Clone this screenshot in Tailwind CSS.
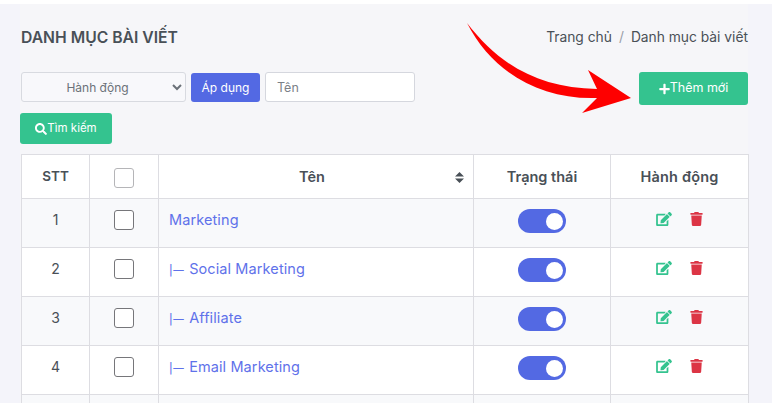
<!DOCTYPE html>
<html lang="en">
<head>
    <meta charset="UTF-8">
    <meta name="viewport" content="width=device-width, initial-scale=1.0">
    <title>Danh mục bài viết</title>
    <script src="https://cdn.jsdelivr.net/npm/@tailwindcss/browser@4"></script>
</head>
<body class="relative h-[403px] w-[772px] overflow-hidden bg-white font-['Inter','Noto_Sans',sans-serif] text-[#495057]">
<div class="mt-[4px] h-[399px] overflow-hidden bg-[#f4f4fa] pl-[20px] pr-[24px]">
    <div class="h-full bg-[#f6f6f9]">
        <!-- Title + breadcrumb -->
        <div class="flex h-[68px] items-start justify-between pl-[1px] pt-[23px]">
            <h2 class="mt-[1px] text-[15.7px] leading-[20px] font-semibold text-[#495057]">DANH MỤC BÀI VIẾT</h2>
            <div class="flex gap-[7px] text-[13.8px] leading-[20px] text-[#495057]">
                <span>Trang chủ</span><span class="text-[#9aa0a8]">/</span><span>Danh mục bài viết</span>
            </div>
        </div>

        <!-- Toolbar -->
        <div class="flex items-start justify-between">
            <div>
                <div class="flex items-start pl-[1px]">
                    <select class="h-[30px] w-[165px] rounded-[3px] border border-[#d8dae0] bg-[#f8f8fb] text-center text-[12px] text-[#6b7178]">
                        <option>Hành động</option>
                    </select>
                    <button class="ml-[5px] mt-[1px] h-[29px] w-[69px] rounded-[3px] bg-[#5369e3] text-[12px] text-white">Áp dụng</button>
                    <input type="text" placeholder="Tên" class="ml-[5px] h-[30px] w-[150px] rounded-[3px] border border-[#d5d7de] bg-white pl-[11px] text-[12.5px] placeholder:text-[#7b8087]">
                </div>
                <button class="mt-[11px] flex h-[31px] w-[92px] items-center justify-center rounded-[3px] bg-[#34c38f] text-[11.5px] text-white">
                    <svg class="h-[12px] w-[12px] fill-white" viewBox="0 0 512 512"><path d="M505 442.7L405.3 343c-4.5-4.5-10.6-7-17-7H372c27.6-35.3 44-79.7 44-128C416 93.1 322.9 0 208 0S0 93.1 0 208s93.1 208 208 208c48.3 0 92.7-16.4 128-44v16.3c0 6.4 2.5 12.5 7 17l99.7 99.7c9.4 9.4 24.6 9.4 33.9 0l28.3-28.3c9.4-9.4 9.4-24.6.1-34zM208 336c-70.7 0-128-57.2-128-128 0-70.7 57.2-128 128-128 70.7 0 128 57.2 128 128 0 70.7-57.2 128-128 128z"/></svg>Tìm kiếm
                </button>
            </div>
            <button class="flex h-[33px] w-[109px] items-center justify-center rounded-[3px] bg-[#34c38f] text-[12.5px] text-white">
                <svg class="h-[12px] w-[11px] fill-white" viewBox="0 0 448 512"><path d="M416 208H272V64c0-17.67-14.33-32-32-32h-32c-17.67 0-32 14.33-32 32v144H32c-17.67 0-32 14.33-32 32v32c0 17.67 14.33 32 32 32h144v144c0 17.67 14.33 32 32 32h32c17.67 0 32-14.33 32-32V304h144c17.67 0 32-14.33 32-32v-32c0-17.67-14.33-32-32-32z"/></svg>Thêm mới
            </button>
        </div>

        <!-- Table -->
        <table class="ml-[1px] mt-[10px] w-[727px] table-fixed border-collapse bg-white text-[14px]">
            <colgroup>
                <col class="w-[68px]"><col class="w-[69px]"><col class="w-[315px]"><col class="w-[137px]"><col class="w-[138px]">
            </colgroup>
            <thead>
                <tr class="h-[44px] font-semibold">
                    <th class="border border-[#dddde2] text-[13.5px] font-semibold">STT</th>
                    <th class="border border-[#dddde2]"><span class="mx-auto mt-[2px] block h-[20px] w-[20px] rounded-[3px] border border-[#b5b5b8] bg-white"></span></th>
                    <th class="relative border border-[#dddde2] pr-[8px] text-[14.5px] font-semibold">Tên
                        <svg class="absolute right-[9px] top-[17px] h-[11px] w-[9px] fill-[#495057]" viewBox="0 0 9 11"><path d="M4.5 0L9 4.5H0zM4.5 11L0 6.5h9z"/></svg>
                    </th>
                    <th class="border border-[#dddde2] text-[14.5px] font-semibold">Trạng thái</th>
                    <th class="border border-[#dddde2] text-[14.5px] font-semibold tracking-[0.2px]">Hành động</th>
                </tr>
            </thead>
            <tbody>
                <tr class="h-[49px] bg-[#f8f9fb]">
                    <td class="border border-[#dddde2] pb-[7px] text-center">1</td>
                    <td class="border border-[#dddde2] pb-[6px]"><span class="mx-auto block h-[20px] w-[20px] rounded-[3px] border border-[#76767a] bg-white"></span></td>
                    <td class="border border-[#dddde2] pb-[7px] pl-[10px] text-[14.5px] tracking-[0.1px] text-[#5f72ea]">Marketing</td>
                    <td class="border border-[#dddde2] pb-[4px]"><span class="mx-auto flex h-[24px] w-[48px] items-center justify-end rounded-full bg-[#5369e3] pr-[3px]"><span class="h-[17px] w-[17px] rounded-full bg-white"></span></span></td>
                    <td class="border border-[#dddde2]">
                        <div class="flex items-center justify-center gap-[18px] pb-[9px]">
                            <svg class="h-[14px] w-[16px] fill-[#34c38f]" viewBox="0 0 576 512"><path d="M402.6 83.2l90.2 90.2c3.8 3.8 3.8 10 0 13.8L274.4 405.6l-92.8 10.3c-12.4 1.4-22.9-9.1-21.5-21.5l10.3-92.8L388.8 83.2c3.8-3.8 10-3.8 13.8 0zm162-22.9l-48.8-48.8c-15.2-15.2-39.9-15.2-55.2 0l-35.4 35.4c-3.8 3.8-3.8 10 0 13.8l90.2 90.2c3.8 3.8 10 3.8 13.8 0l35.4-35.4c15.2-15.3 15.2-40 0-55.2zM384 346.2V448H64V128h229.8c3.2 0 6.2-1.3 8.5-3.5l40-40c7.6-7.6 2.2-20.5-8.5-20.5H48C21.5 64 0 85.5 0 112v352c0 26.5 21.5 48 48 48h352c26.5 0 48-21.5 48-48V306.2c0-10.7-12.9-16-20.5-8.5l-40 40c-2.2 2.3-3.5 5.3-3.5 8.5z"/></svg>
                            <svg class="h-[14px] w-[13px] fill-[#dc3545]" viewBox="0 0 448 512"><path d="M432 32H312l-9.4-18.7A24 24 0 0 0 281.1 0H166.8a23.72 23.72 0 0 0-21.4 13.3L136 32H16A16 16 0 0 0 0 48v32a16 16 0 0 0 16 16h416a16 16 0 0 0 16-16V48a16 16 0 0 0-16-16zM53.2 467a48 48 0 0 0 47.9 45h245.8a48 48 0 0 0 47.9-45L416 128H32z"/></svg>
                        </div>
                    </td>
                </tr>
                <tr class="h-[49px] bg-white">
                    <td class="border border-[#dddde2] pb-[7px] text-center">2</td>
                    <td class="border border-[#dddde2] pb-[6px]"><span class="mx-auto block h-[20px] w-[20px] rounded-[3px] border border-[#76767a] bg-white"></span></td>
                    <td class="border border-[#dddde2] pb-[7px] pl-[10px] text-[14.5px] tracking-[0.1px] text-[#5f72ea]"><span class="mr-[5px] text-[10.5px] font-medium tracking-[0.5px]">|—</span>Social Marketing</td>
                    <td class="border border-[#dddde2] pb-[4px]"><span class="mx-auto flex h-[24px] w-[48px] items-center justify-end rounded-full bg-[#5369e3] pr-[3px]"><span class="h-[17px] w-[17px] rounded-full bg-white"></span></span></td>
                    <td class="border border-[#dddde2]">
                        <div class="flex items-center justify-center gap-[18px] pb-[9px]">
                            <svg class="h-[14px] w-[16px] fill-[#34c38f]" viewBox="0 0 576 512"><path d="M402.6 83.2l90.2 90.2c3.8 3.8 3.8 10 0 13.8L274.4 405.6l-92.8 10.3c-12.4 1.4-22.9-9.1-21.5-21.5l10.3-92.8L388.8 83.2c3.8-3.8 10-3.8 13.8 0zm162-22.9l-48.8-48.8c-15.2-15.2-39.9-15.2-55.2 0l-35.4 35.4c-3.8 3.8-3.8 10 0 13.8l90.2 90.2c3.8 3.8 10 3.8 13.8 0l35.4-35.4c15.2-15.3 15.2-40 0-55.2zM384 346.2V448H64V128h229.8c3.2 0 6.2-1.3 8.5-3.5l40-40c7.6-7.6 2.2-20.5-8.5-20.5H48C21.5 64 0 85.5 0 112v352c0 26.5 21.5 48 48 48h352c26.5 0 48-21.5 48-48V306.2c0-10.7-12.9-16-20.5-8.5l-40 40c-2.2 2.3-3.5 5.3-3.5 8.5z"/></svg>
                            <svg class="h-[14px] w-[13px] fill-[#dc3545]" viewBox="0 0 448 512"><path d="M432 32H312l-9.4-18.7A24 24 0 0 0 281.1 0H166.8a23.72 23.72 0 0 0-21.4 13.3L136 32H16A16 16 0 0 0 0 48v32a16 16 0 0 0 16 16h416a16 16 0 0 0 16-16V48a16 16 0 0 0-16-16zM53.2 467a48 48 0 0 0 47.9 45h245.8a48 48 0 0 0 47.9-45L416 128H32z"/></svg>
                        </div>
                    </td>
                </tr>
                <tr class="h-[49px] bg-[#f8f9fb]">
                    <td class="border border-[#dddde2] pb-[7px] text-center">3</td>
                    <td class="border border-[#dddde2] pb-[6px]"><span class="mx-auto block h-[20px] w-[20px] rounded-[3px] border border-[#76767a] bg-white"></span></td>
                    <td class="border border-[#dddde2] pb-[7px] pl-[10px] text-[14.5px] tracking-[0.1px] text-[#5f72ea]"><span class="mr-[5px] text-[10.5px] font-medium tracking-[0.5px]">|—</span>Affiliate</td>
                    <td class="border border-[#dddde2] pb-[4px]"><span class="mx-auto flex h-[24px] w-[48px] items-center justify-end rounded-full bg-[#5369e3] pr-[3px]"><span class="h-[17px] w-[17px] rounded-full bg-white"></span></span></td>
                    <td class="border border-[#dddde2]">
                        <div class="flex items-center justify-center gap-[18px] pb-[9px]">
                            <svg class="h-[14px] w-[16px] fill-[#34c38f]" viewBox="0 0 576 512"><path d="M402.6 83.2l90.2 90.2c3.8 3.8 3.8 10 0 13.8L274.4 405.6l-92.8 10.3c-12.4 1.4-22.9-9.1-21.5-21.5l10.3-92.8L388.8 83.2c3.8-3.8 10-3.8 13.8 0zm162-22.9l-48.8-48.8c-15.2-15.2-39.9-15.2-55.2 0l-35.4 35.4c-3.8 3.8-3.8 10 0 13.8l90.2 90.2c3.8 3.8 10 3.8 13.8 0l35.4-35.4c15.2-15.3 15.2-40 0-55.2zM384 346.2V448H64V128h229.8c3.2 0 6.2-1.3 8.5-3.5l40-40c7.6-7.6 2.2-20.5-8.5-20.5H48C21.5 64 0 85.5 0 112v352c0 26.5 21.5 48 48 48h352c26.5 0 48-21.5 48-48V306.2c0-10.7-12.9-16-20.5-8.5l-40 40c-2.2 2.3-3.5 5.3-3.5 8.5z"/></svg>
                            <svg class="h-[14px] w-[13px] fill-[#dc3545]" viewBox="0 0 448 512"><path d="M432 32H312l-9.4-18.7A24 24 0 0 0 281.1 0H166.8a23.72 23.72 0 0 0-21.4 13.3L136 32H16A16 16 0 0 0 0 48v32a16 16 0 0 0 16 16h416a16 16 0 0 0 16-16V48a16 16 0 0 0-16-16zM53.2 467a48 48 0 0 0 47.9 45h245.8a48 48 0 0 0 47.9-45L416 128H32z"/></svg>
                        </div>
                    </td>
                </tr>
                <tr class="h-[49px] bg-white">
                    <td class="border border-[#dddde2] pb-[7px] text-center">4</td>
                    <td class="border border-[#dddde2] pb-[6px]"><span class="mx-auto block h-[20px] w-[20px] rounded-[3px] border border-[#76767a] bg-white"></span></td>
                    <td class="border border-[#dddde2] pb-[7px] pl-[10px] text-[14.5px] tracking-[0.1px] text-[#5f72ea]"><span class="mr-[5px] text-[10.5px] font-medium tracking-[0.5px]">|—</span>Email Marketing</td>
                    <td class="border border-[#dddde2] pb-[4px]"><span class="mx-auto flex h-[24px] w-[48px] items-center justify-end rounded-full bg-[#5369e3] pr-[3px]"><span class="h-[17px] w-[17px] rounded-full bg-white"></span></span></td>
                    <td class="border border-[#dddde2]">
                        <div class="flex items-center justify-center gap-[18px] pb-[9px]">
                            <svg class="h-[14px] w-[16px] fill-[#34c38f]" viewBox="0 0 576 512"><path d="M402.6 83.2l90.2 90.2c3.8 3.8 3.8 10 0 13.8L274.4 405.6l-92.8 10.3c-12.4 1.4-22.9-9.1-21.5-21.5l10.3-92.8L388.8 83.2c3.8-3.8 10-3.8 13.8 0zm162-22.9l-48.8-48.8c-15.2-15.2-39.9-15.2-55.2 0l-35.4 35.4c-3.8 3.8-3.8 10 0 13.8l90.2 90.2c3.8 3.8 10 3.8 13.8 0l35.4-35.4c15.2-15.3 15.2-40 0-55.2zM384 346.2V448H64V128h229.8c3.2 0 6.2-1.3 8.5-3.5l40-40c7.6-7.6 2.2-20.5-8.5-20.5H48C21.5 64 0 85.5 0 112v352c0 26.5 21.5 48 48 48h352c26.5 0 48-21.5 48-48V306.2c0-10.7-12.9-16-20.5-8.5l-40 40c-2.2 2.3-3.5 5.3-3.5 8.5z"/></svg>
                            <svg class="h-[14px] w-[13px] fill-[#dc3545]" viewBox="0 0 448 512"><path d="M432 32H312l-9.4-18.7A24 24 0 0 0 281.1 0H166.8a23.72 23.72 0 0 0-21.4 13.3L136 32H16A16 16 0 0 0 0 48v32a16 16 0 0 0 16 16h416a16 16 0 0 0 16-16V48a16 16 0 0 0-16-16zM53.2 467a48 48 0 0 0 47.9 45h245.8a48 48 0 0 0 47.9-45L416 128H32z"/></svg>
                        </div>
                    </td>
                </tr>
                <tr class="h-[49px] bg-[#f8f9fb]">
                    <td class="border border-[#dddde2]"></td><td class="border border-[#dddde2]"></td><td class="border border-[#dddde2]"></td><td class="border border-[#dddde2]"></td><td class="border border-[#dddde2]"></td>
                </tr>
            </tbody>
        </table>
    </div>
</div>

<!-- Red arrow drawn over the page -->
<svg class="absolute left-0 top-0 h-[403px] w-[772px]" viewBox="0 0 772 403">
    <path fill="#fe0000" d="M467 23C500 66 540 88 597 89L588 70L631 98L582 113L597 98C540 100 492 72 467 23Z"/>
</svg>
</body>
</html>
